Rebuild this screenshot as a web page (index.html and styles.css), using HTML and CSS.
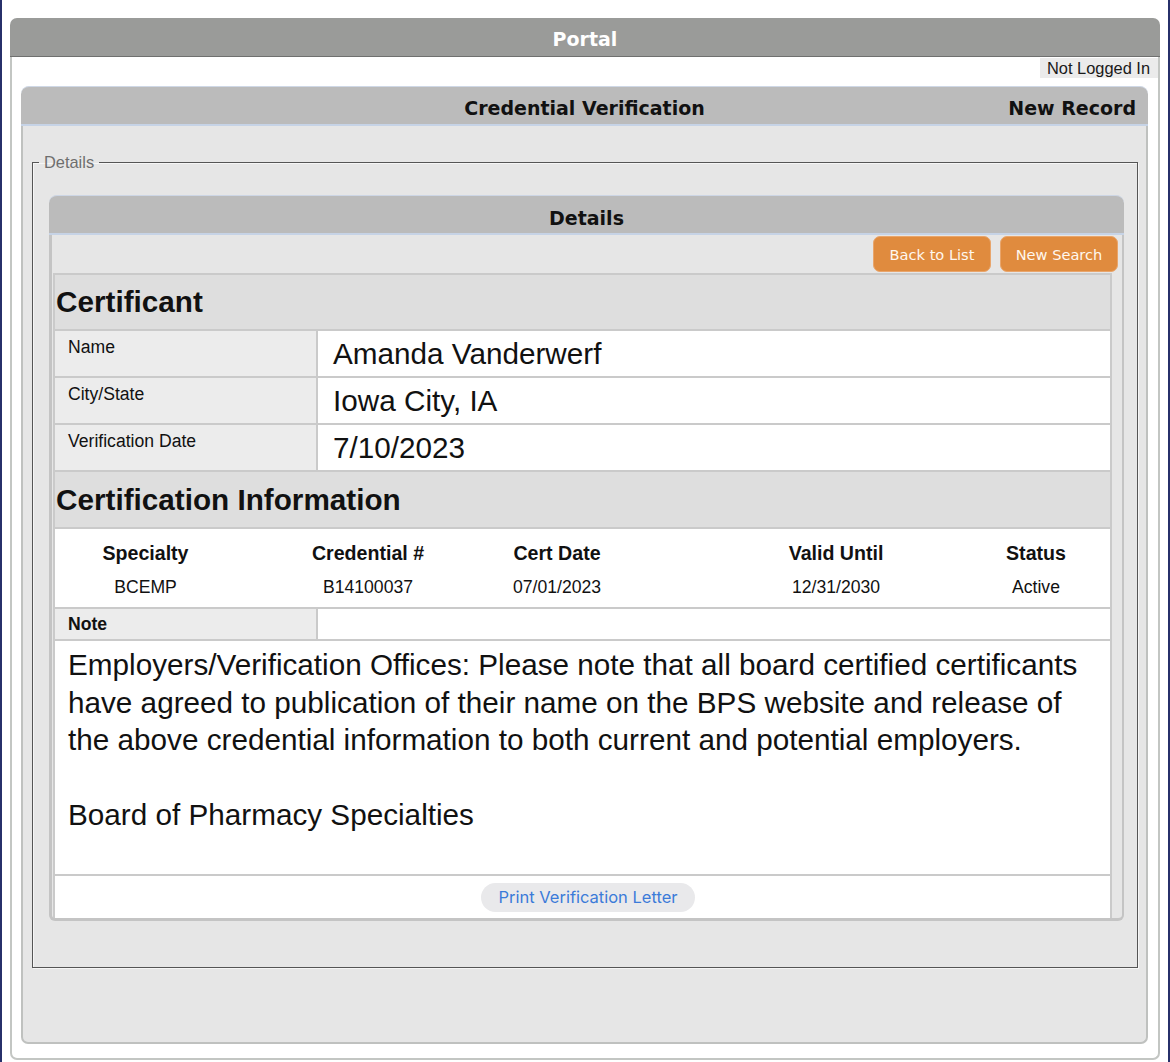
FILE: index.html
```html
<!DOCTYPE html>
<html lang="en">

<head>
    <meta charset="UTF-8">
    <meta name="viewport" content="width=device-width, initial-scale=1.0">
    <title>Credential Verification</title>
    <link rel="stylesheet" href="styles.css">
</head>

<body>
    <div class="screen">
        <div class="portal">
            <div class="portal_head">Portal</div>
            <div class="portal_body">
                <div class="login_bar"><span class="login_status">Not Logged In</span></div>

                <!-- 外层面板 -->
                <div class="panel">
                    <div class="panel_head">
                        <span></span>
                        <span class="panel_title">Credential Verification</span>
                        <span class="panel_mode">New Record</span>
                    </div>
                    <div class="panel_body">
                        <fieldset class="details_set">
                            <legend>Details</legend>

                            <div class="sub_panel">
                                <div class="sub_head">Details</div>
                                <div class="sub_body">
                                    <div class="toolbar">
                                        <button class="btn">Back to List</button>
                                        <button class="btn">New Search</button>
                                    </div>

                                    <div class="record">
                                        <div class="record_sect">Certificant</div>
                                        <div class="record_row">
                                            <div class="record_label">Name</div>
                                            <div class="record_value">Amanda Vanderwerf</div>
                                        </div>
                                        <div class="record_row">
                                            <div class="record_label">City/State</div>
                                            <div class="record_value">Iowa City, IA</div>
                                        </div>
                                        <div class="record_row">
                                            <div class="record_label">Verification Date</div>
                                            <div class="record_value">7/10/2023</div>
                                        </div>

                                        <div class="record_sect sect_tall">Certification Information</div>
                                        <div class="cert_grid">
                                            <div class="cert_head">Specialty</div>
                                            <div class="cert_head">Credential #</div>
                                            <div class="cert_head">Cert Date</div>
                                            <div class="cert_head col_valid">Valid Until</div>
                                            <div class="cert_head col_status">Status</div>
                                            <div>BCEMP</div>
                                            <div>B14100037</div>
                                            <div>07/01/2023</div>
                                            <div class="col_valid">12/31/2030</div>
                                            <div class="col_status">Active</div>
                                        </div>

                                        <div class="record_row note_row">
                                            <div class="record_label note_label">Note</div>
                                            <div class="record_value"></div>
                                        </div>
                                        <div class="note_text">
                                            Employers/Verification Offices: Please note that all board certified certificants have agreed to publication of their name on the BPS website and release of the above credential information to both current and potential employers.<br><br>Board of Pharmacy Specialties
                                        </div>
                                        <div class="print_row">
                                            <button class="print_btn">Print Verification Letter</button>
                                        </div>
                                    </div>
                                </div>
                            </div>
                        </fieldset>
                    </div>
                </div>
            </div>
        </div>
    </div>
</body>

</html>
```

FILE: styles.css
```css
* {
    margin: 0;
    padding: 0;
    box-sizing: border-box;
}

body {
    background-color: #fff;
    font-family: "Liberation Sans", Arial, sans-serif;
    color: #111;
}

/* 页面外框 */
.screen {
    height: 1062px;
    padding: 18px 8px 0;
    border-left: 2px solid #27306a;
    border-right: 2px solid #27306a;
}

.portal_head {
    height: 39px;
    font: bold 19px/42px "DejaVu Sans", Verdana, sans-serif;
    text-align: center;
    color: #fff;
    background-color: #9a9b99;
    border-bottom: 1px solid #6f706f;
    border-radius: 7px 7px 0 0;
}

.portal_body {
    padding: 1px 0 14px;
    border: 2px solid #c3c6c3;
    border-top: 0;
    border-radius: 0 0 7px 7px;
}

.login_bar {
    display: flex;
    justify-content: flex-end;
}

.login_status {
    height: 20px;
    line-height: 20px;
    padding: 0 8px 0 7px;
    font-size: 16.4px;
    color: #1a1a1a;
    background-color: #ebebeb;
}

/* 面板 */
.panel {
    margin: 8px 10px 0 9px;
}

.panel_head {
    display: grid;
    grid-template-columns: 1fr auto 1fr;
    align-items: center;
    height: 40px;
    padding: 4px 12px 0;
    font: bold 19px/24px "DejaVu Sans", Verdana, sans-serif;
    background-color: #bbbbbb;
    border-top: 1px solid #cfd8e6;
    border-bottom: 2px solid #c6d3e6;
    border-radius: 8px 8px 0 0;
}

.panel_mode {
    justify-self: end;
}

.panel_body {
    padding: 27px 8px 74px 9px;
    background-color: #e6e6e6;
    border: 2px solid #bfc1bf;
    border-top: 0;
    border-radius: 0 0 7px 7px;
}

.details_set {
    min-width: 0;
    padding: 24px 13px 46px 16px;
    border: 1px solid #555;
    box-shadow: 1px 1px 0 #f6f6f6, inset 1px 1px 0 #f6f6f6;
}

.details_set legend {
    margin-left: -10px;
    padding: 0 5px;
    line-height: 18px;
    font-size: 16.4px;
    color: #6e6e6e;
}

.sub_head {
    height: 40px;
    padding-top: 5px;
    font: bold 19px/34px "DejaVu Sans", Verdana, sans-serif;
    text-align: center;
    background-color: #bbbbbb;
    border-top: 1px solid #cdd6e5;
    border-bottom: 2px solid #c6d3e6;
    border-radius: 8px 8px 0 0;
}

.sub_body {
    padding: 0 10px 0 1px;
    background-color: #e6e6e6;
    border: solid #c4c4c4;
    border-width: 0 2px 3px 3px;
    border-radius: 0 0 6px 6px;
}

/* 按钮 */
.toolbar {
    display: flex;
    justify-content: flex-end;
    gap: 9px;
    height: 38px;
    padding-top: 1px;
    margin-right: -6px;
}

.btn {
    width: 118px;
    height: 36px;
    font: 14.6px "DejaVu Sans", Tahoma, sans-serif;
    color: #fff7ee;
    background-color: #e08b3e;
    border: 1px solid #e9a56b;
    border-radius: 7px;
    cursor: pointer;
}

/* 记录表格 */
.record {
    background-color: #fff;
    border: 2px solid #cacaca;
    border-bottom: 0;
}

.record_sect {
    display: flex;
    align-items: center;
    height: 56px;
    padding-left: 1px;
    font-size: 29.7px;
    font-weight: bold;
    background-color: #dedede;
    border-bottom: 2px solid #cacaca;
}

.sect_tall {
    height: 57px;
}

.record_row {
    display: grid;
    grid-template-columns: 263px 1fr;
    height: 47px;
    border-bottom: 2px solid #cacaca;
}

.record_label {
    padding: 6px 0 0 13px;
    line-height: 20px;
    font-size: 17.6px;
    background-color: #ececec;
    border-right: 2px solid #cacaca;
}

.record_value {
    display: flex;
    align-items: center;
    padding-left: 15px;
    font-size: 29.7px;
}

.note_row {
    height: 32px;
}

.note_label {
    display: flex;
    align-items: center;
    padding-top: 0;
    font-weight: bold;
}

.cert_grid {
    display: grid;
    grid-template-columns: 181px 264px 114px 344px 1fr;
    align-content: start;
    row-gap: 13px;
    justify-items: center;
    height: 80px;
    padding-top: 13px;
    line-height: 20px;
    font-size: 17.6px;
    border-bottom: 2px solid #cacaca;
}

.cert_head {
    line-height: 22px;
    font-size: 19.6px;
    font-weight: bold;
}

.col_valid {
    padding-left: 100px;
}

.col_status {
    padding-left: 4px;
}

.note_text {
    height: 235px;
    padding: 5px 20px 0 13px;
    line-height: 37.5px;
    font-size: 29.7px;
    border-bottom: 2px solid #cacaca;
}

.print_row {
    display: flex;
    justify-content: center;
    align-items: center;
    height: 42px;
    padding-left: 11px;
}

.print_btn {
    width: 214px;
    height: 29px;
    font: 16.5px Inter, "Noto Sans", sans-serif;
    color: #3b7bd9;
    background-color: #e9e9eb;
    border: 0;
    border-radius: 15px;
    cursor: pointer;
}
```
